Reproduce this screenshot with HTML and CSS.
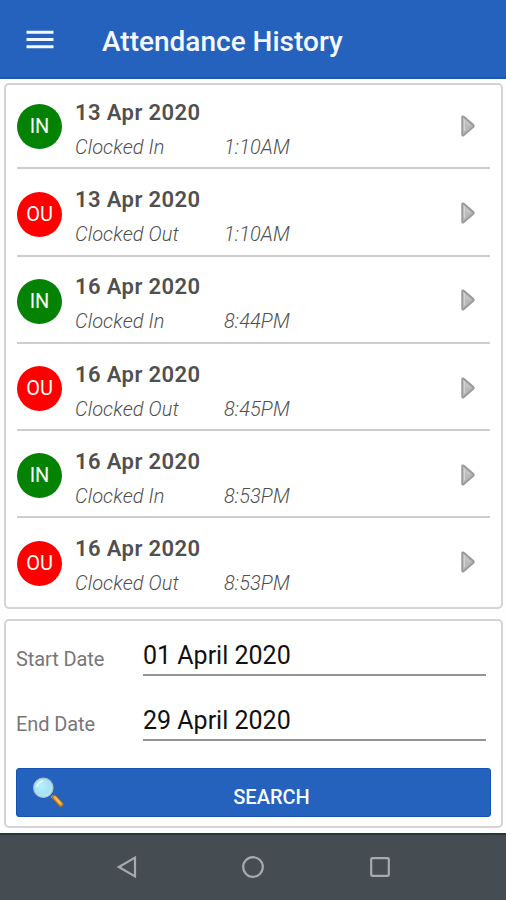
FILE: index.html
```
<!DOCTYPE html>
<html lang="en">
<head>
<meta charset="utf-8">
<title>Attendance History</title>
<link rel="stylesheet" href="styles.css">
</head>
<body>
<svg class="defs" width="0" height="0" aria-hidden="true">
  <defs>
    <linearGradient id="arrowFill" x1="0" y1="0" x2="1" y2="1"><stop offset="0" stop-color="#c9c9c9"/><stop offset="1" stop-color="#aaa"/></linearGradient>
    <radialGradient id="lens" cx=".4" cy=".4" r=".65"><stop offset="0" stop-color="#b9f0ff"/><stop offset=".7" stop-color="#a2e2f8"/><stop offset="1" stop-color="#d5e9ed"/></radialGradient>
    <symbol id="arrow" viewBox="0 0 16 24">
      <path d="M2.2 3.2Q2.2 1.8 3.6 2.6L13.4 11Q14.3 12 13.4 12.8L3.6 21.2Q2.2 22.2 2.2 20.6Z" fill="url(#arrowFill)" stroke="#999" stroke-width="1.8"/>
      <path d="M4.4 5.5V17M6.3 8.5L9.5 11.8" fill="none" stroke="#d6d6d6" stroke-width="1"/>
    </symbol>
  </defs>
</svg>
<header class="bar">
  <svg class="menu" width="28" height="20" viewBox="0 0 28 20"><path d="M.5 2.2H27.5M.5 9.4H27.5M.5 16.8H27.5" stroke="#f4f8ff" stroke-width="3"/></svg>
  <h1>Attendance History</h1>
</header>
<main>
  <ul class="card list">
    <li class="row"><span class="badge in">IN</span><div class="info"><b>13 Apr 2020</b><div class="detail"><i>Clocked In</i><i>1:10AM</i></div></div><svg class="arrow"><use href="#arrow"/></svg></li>
    <li class="row"><span class="badge out">OU</span><div class="info"><b>13 Apr 2020</b><div class="detail"><i>Clocked Out</i><i>1:10AM</i></div></div><svg class="arrow"><use href="#arrow"/></svg></li>
    <li class="row"><span class="badge in">IN</span><div class="info"><b>16 Apr 2020</b><div class="detail"><i>Clocked In</i><i>8:44PM</i></div></div><svg class="arrow"><use href="#arrow"/></svg></li>
    <li class="row"><span class="badge out">OU</span><div class="info"><b>16 Apr 2020</b><div class="detail"><i>Clocked Out</i><i>8:45PM</i></div></div><svg class="arrow"><use href="#arrow"/></svg></li>
    <li class="row"><span class="badge in">IN</span><div class="info"><b>16 Apr 2020</b><div class="detail"><i>Clocked In</i><i>8:53PM</i></div></div><svg class="arrow"><use href="#arrow"/></svg></li>
    <li class="row"><span class="badge out">OU</span><div class="info"><b>16 Apr 2020</b><div class="detail"><i>Clocked Out</i><i>8:53PM</i></div></div><svg class="arrow"><use href="#arrow"/></svg></li>
  </ul>
  <section class="card search">
    <div class="field"><span class="label">Start Date</span><span class="value">01 April 2020</span></div>
    <div class="field"><span class="label">End Date</span><span class="value">29 April 2020</span></div>
    <button class="submit" type="button">
      <svg class="glass" width="32" height="32" viewBox="0 0 32 32">
        <path d="M20 20L23 23" stroke="#b9c3cc" stroke-width="3"/>
        <path d="M22.5 21.5L29 28.5" stroke="#a86d24" stroke-width="5" stroke-linecap="round"/>
        <path d="M22.8 21.4L28.8 27.9" stroke="#f5ad3c" stroke-width="3" stroke-linecap="round"/>
        <path d="M23.5 21.5L28.5 27" stroke="#ffd17c" stroke-width="1"/>
        <circle cx="11.3" cy="11.7" r="9.7" fill="url(#lens)" stroke="#a9bfc9" stroke-width="1.2"/>
        <path d="M5 11Q6 6 11 5" fill="none" stroke="#e5fbff" stroke-width="1.6"/>
      </svg>
      <span>SEARCH</span>
    </button>
  </section>
</main>
<nav class="nav">
  <svg width="24" height="24" viewBox="0 0 24 24"><path d="M20 2.6V21.4L3.8 12Z"/></svg>
  <svg width="24" height="24" viewBox="0 0 24 24"><circle cx="12" cy="12" r="9.8"/></svg>
  <svg width="24" height="24" viewBox="0 0 24 24"><rect x="3.2" y="3.2" width="17.6" height="17.6" rx="1"/></svg>
</nav>
</body>
</html>
```
FILE: styles.css
```
* { box-sizing: border-box; }
body {
  margin: 0;
  width: 506px;
  height: 900px;
  display: flex;
  flex-direction: column;
  background: #fefefe;
  font-family: Roboto, "Liberation Sans", sans-serif;
  overflow: hidden;
}
.defs { position: absolute; }
.bar {
  height: 79px;
  flex: none;
  display: flex;
  align-items: center;
  padding: 3px 0 0 26px;
  background: #2462be;
  border-bottom: 2px solid #1857b5;
  color: #f4f8ff;
}
.menu { flex: none; margin-right: 48px; }
h1 { margin: 3px 0 0; font-size: 28px; line-height: 36px; font-weight: 500; white-space: nowrap; }
main {
  flex: none;
  height: 754px;
  padding: 4px 3px 0 4px;
  display: flex;
  flex-direction: column;
  gap: 10px;
}
.card { margin: 0; border: 2px solid #d4d4d4; border-radius: 5px; background: #fff; }
.list { height: 526px; padding: 0 11px; list-style: none; }
.row {
  height: 87.25px;
  display: flex;
  align-items: flex-end;
  padding-bottom: 5.5px;
  border-bottom: 2px solid #cdcdcd;
}
.row:first-child { height: 84.25px; }
.row:last-child { border-bottom-color: transparent; }
.badge {
  width: 45px;
  height: 45px;
  flex: none;
  margin: 0 13px 12.5px 0;
  border-radius: 50%;
  color: #f8fff8;
  font-size: 20px;
  line-height: 45px;
  text-align: center;
}
.in { background: #048204; }
.out { background: #fe0000; }
.info { flex: 1; color: #505050; white-space: nowrap; }
.info b { display: block; font-size: 22px; line-height: 30px; font-weight: 600; letter-spacing: .4px; }
.detail { display: grid; grid-template-columns: 149px 1fr; margin-top: 4px; font-size: 20px; line-height: 30px; font-weight: 300; letter-spacing: .1px; }
.arrow { width: 16px; height: 24px; flex: none; margin: 0 14px 24px 0; }
.search { height: 209px; padding: 5px 10px 0; }
.field { height: 65px; display: flex; align-items: center; padding-right: 5px; }
.label { width: 127px; padding-top: 0; color: #777; font-size: 20px; font-weight: 400; letter-spacing: -.1px; }
.value { flex: 1; height: 40px; padding-top: 5px; margin-top: -5px; border-bottom: 2px solid #949494; color: #111; font-size: 25px; line-height: 30px; white-space: nowrap; }
.submit {
  position: relative;
  width: 475px;
  height: 49px;
  display: flex;
  align-items: center;
  justify-content: center;
  margin: 12px 0 0;
  padding: 8px 0 0 36px;
  border: 1px solid #1651b4;
  border-radius: 3px;
  background: #2462be;
  color: #f6f9ff;
  font: 500 20px/28px Roboto, "Liberation Sans", sans-serif;
}
.glass { position: absolute; left: 15px; top: 7px; }
.nav {
  height: 67px;
  flex: none;
  display: flex;
  align-items: center;
  justify-content: center;
  gap: 102.5px;
  padding: 0 0 2px;
  border-top: 2px solid #26383a;
  background: #464d52;
}
.nav svg { fill: none; stroke: #a5abad; stroke-width: 2.2; }
```
